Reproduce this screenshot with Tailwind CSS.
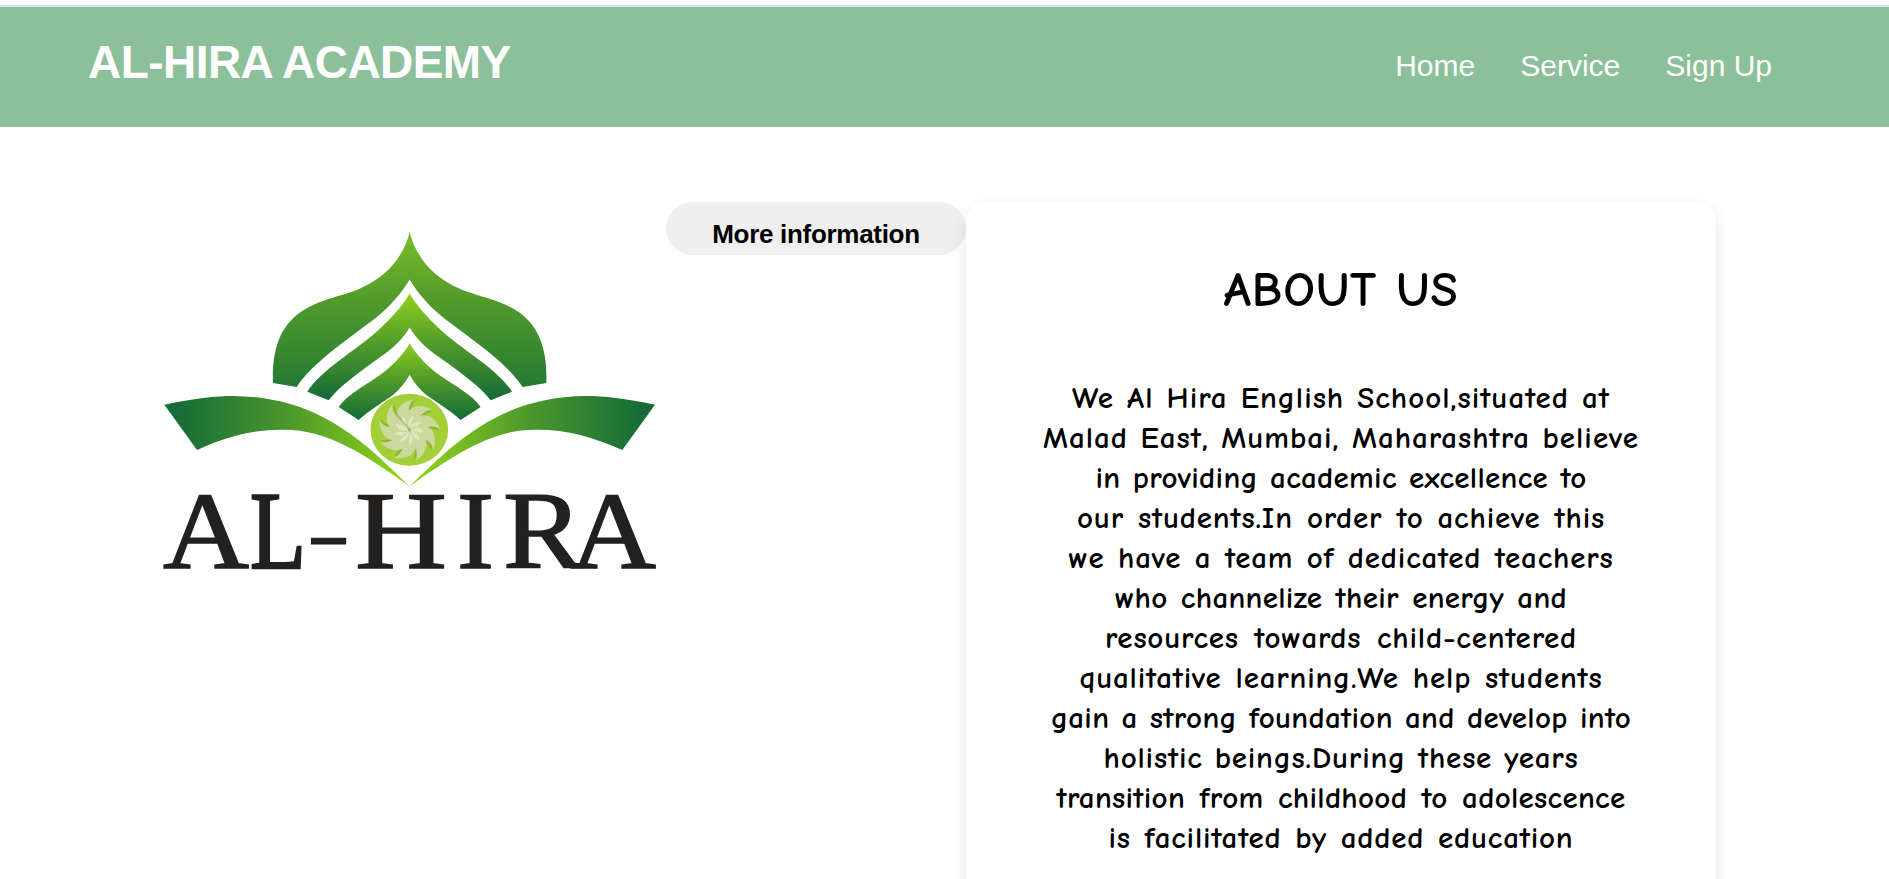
<!DOCTYPE html>
<html lang="en">
<head>
<meta charset="utf-8">
<title>Al-Hira Academy</title>
<script src="https://cdn.jsdelivr.net/npm/@tailwindcss/browser@4"></script>
</head>
<body class="h-screen overflow-hidden bg-white font-['Liberation_Sans',sans-serif] text-black">
<header class="mt-[5px] flex h-[122px] justify-between border-t-2 border-[#dfe1e0] bg-[#8cc09a] pr-[117px] pl-[88px] text-white">
  <h1 class="pt-[29px] text-[46px] leading-[52px] font-bold tracking-[-0.55px] whitespace-nowrap">AL-HIRA ACADEMY</h1>
  <nav class="flex gap-[45px] pt-[41px] text-[30px] leading-[35px]">
    <a>Home</a><a>Service</a><a>Sign Up</a>
  </nav>
</header>
<main class="flex items-start pt-[75px] pl-[150px]">
  <svg class="h-[378px] w-[516px] shrink-0 overflow-visible" viewBox="150 202 516 378">
    <defs>
      <linearGradient id="dome" gradientUnits="userSpaceOnUse" x1="0" y1="33" x2="0" y2="500">
        <stop offset="0" stop-color="#7abd28"/><stop offset=".4" stop-color="#559e2b"/><stop offset=".65" stop-color="#418f2e"/><stop offset="1" stop-color="#267933"/>
      </linearGradient>
      <linearGradient id="mid" gradientUnits="userSpaceOnUse" x1="0" y1="225" x2="0" y2="541">
        <stop offset="0" stop-color="#90cf1f"/><stop offset=".5" stop-color="#4b972c"/><stop offset="1" stop-color="#156a37"/>
      </linearGradient>
      <linearGradient id="low" gradientUnits="userSpaceOnUse" x1="0" y1="375" x2="0" y2="600">
        <stop offset="0" stop-color="#8ac91f"/><stop offset=".5" stop-color="#4b972c"/><stop offset="1" stop-color="#156a37"/>
      </linearGradient>
      <linearGradient id="wing" gradientUnits="userSpaceOnUse" x1="90" y1="0" x2="740" y2="0">
        <stop offset="0" stop-color="#176d37"/><stop offset=".5" stop-color="#4b972c"/><stop offset="1" stop-color="#8fd01c"/>
      </linearGradient>
      <g id="half">
        <path fill="url(#dome)" d="M780 33C765 95 728 146 681 177C605 230 540 224 465 268C395 310 365 380 369 489L440 501C500 410 640 330 708 267C740 236 762 207 780 177Z"/>
        <path fill="url(#mid)" d="M780 219C755 262 715 305 665 348C595 405 510 455 472 515L536 541C570 498 620 462 690 412C735 380 760 355 780 321Z"/>
        <path fill="url(#low)" d="M780 369C757 407 725 440 690 465C640 500 590 525 566 561L626 600C660 570 700 545 725 528C750 508 766 488 780 463Z"/>
        <path fill="url(#wing)" d="M43 554C130 535 200 528 250 528C520 530 660 685 779 799C640 700 530 628 400 629C310 628 230 650 141 690Z"/>
      </g>
      <g id="petal">
        <path fill="#71902a" opacity=".4" d="M5 4C-42 -13 -50 -70 18 -88C-2 -66 8 -35 5 4Z"/>
        <path fill="#cbd99c" d="M0 0C-48 -16 -57 -76 13 -93C-10 -70 3 -38 0 0Z"/>
        <path fill="#e3ecca" opacity=".8" d="M0 0C-20 -12 -24 -26 -18 -42C-11 -32 -2 -22 0 0Z"/>
      </g>
    </defs>
    <g transform="translate(150 220) scale(.33333)">
      <use href="#half"/>
      <use href="#half" transform="translate(1558 0) scale(-1 1)"/>
      <ellipse cx="778" cy="629.500" rx="116.500" ry="108" fill="#a3cf38"/>
      <g transform="translate(777 631)">
        <use href="#petal"/><use href="#petal" transform="rotate(40)"/><use href="#petal" transform="rotate(80)"/>
        <use href="#petal" transform="rotate(120)"/><use href="#petal" transform="rotate(160)"/><use href="#petal" transform="rotate(200)"/>
        <use href="#petal" transform="rotate(240)"/><use href="#petal" transform="rotate(280)"/><use href="#petal" transform="rotate(320)"/>
      </g>
    </g>
    <g class="font-['Liberation_Serif',serif] text-[110px]" fill="#222120" stroke="#222120" stroke-width="1.500">
      <text x="163" y="567.500" textLength="86" lengthAdjust="spacingAndGlyphs">A</text>
      <text x="250" y="567.500" textLength="56" lengthAdjust="spacingAndGlyphs" stroke-width="2.500">L</text>
      <text x="307" y="567.500" textLength="43" lengthAdjust="spacingAndGlyphs" transform="matrix(1 0 0 .7 0 162)">-</text>
      <text x="355" y="567.500" textLength="92" lengthAdjust="spacingAndGlyphs">H</text>
      <text x="457" y="567.500" textLength="37" lengthAdjust="spacingAndGlyphs">I</text>
      <text x="503" y="567.500" textLength="80" lengthAdjust="spacingAndGlyphs">R</text>
      <text x="570" y="567.500" textLength="86" lengthAdjust="spacingAndGlyphs">A</text>
    </g>
  </svg>
  <button class="h-[53px] w-[300px] shrink-0 rounded-full bg-[#efefef] text-[26px] font-bold tracking-[-0.3px]"><span class="block pt-2.5 leading-[30px]">More information</span></button>
  <section class="relative h-[760px] w-[750px] shrink-0 rounded-[20px] bg-white pt-[59px] text-center font-['Comic_Sans_MS','Comic_Neue','Open_Sans',sans-serif] shadow-[0_5px_15px_rgba(0,0,0,0.1)]">
    <h2 class="mx-auto w-[226px] scale-x-[1.04] text-[48px] leading-[60px] font-bold tracking-[0.8px] whitespace-nowrap [text-align-last:justify]">ABOUT US</h2>
    <div class="flex flex-col items-center pt-[57px] text-[31px] leading-[40px] font-bold tracking-[0.3px] whitespace-nowrap [word-spacing:-2px] [&>p]:[text-align-last:justify]">
      <p class="w-[538px] tracking-[1px]">We Al Hira English School,situated at</p>
      <p class="w-[596px] tracking-[1px]">Malad East, Mumbai, Maharashtra believe</p>
      <p class="w-[491px]">in providing academic excellence to</p>
      <p class="w-[528px] tracking-[0.8px]">our students.In order to achieve this</p>
      <p class="w-[545px] tracking-[0.8px]">we have a team of dedicated teachers</p>
      <p class="w-[452px]">who channelize their energy and</p>
      <p class="w-[472px] tracking-[0.8px]">resources towards child-centered</p>
      <p class="w-[523px] tracking-[0.8px]">qualitative learning.We help students</p>
      <p class="w-[580px]">gain a strong foundation and develop into</p>
      <p class="w-[475px] tracking-[0.8px]">holistic beings.During these years</p>
      <p class="w-[569px]">transition from childhood to adolescence</p>
      <p class="w-[465px] tracking-[0.8px]">is facilitated by added education</p>
    </div>
  </section>
</main>
</body>
</html>
